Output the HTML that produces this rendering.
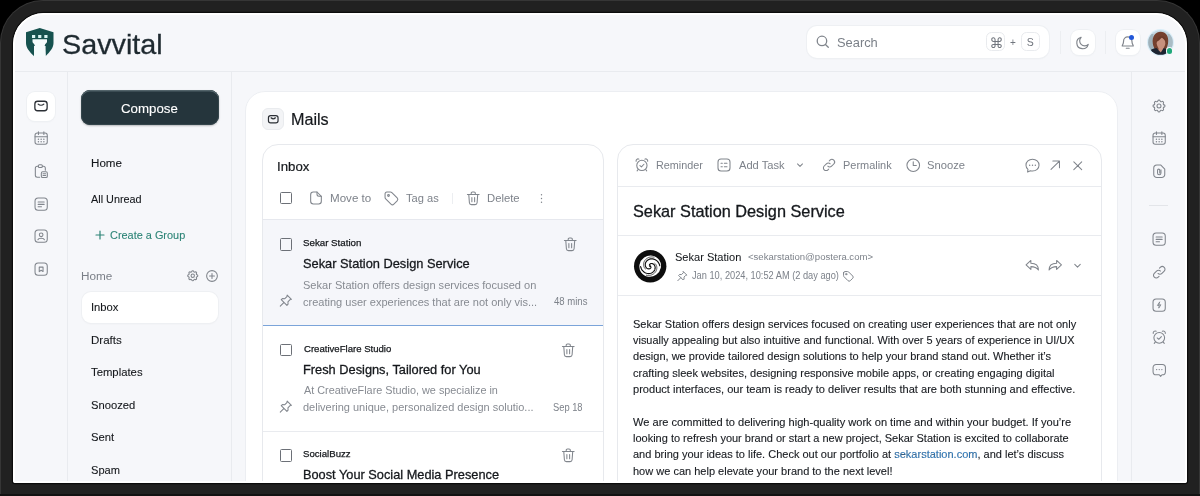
<!DOCTYPE html>
<html lang="en">
<head>
<meta charset="utf-8">
<title>Savvital Mails</title>
<style>
*{box-sizing:border-box;margin:0;padding:0}
html,body{width:1200px;height:496px;overflow:hidden;background:#000;font-family:"Liberation Sans",sans-serif;color:#1c2025}
#frame{position:absolute;left:0;top:0;width:1200px;height:494px;background:#212121;border:1px solid #363636;border-bottom:none;border-radius:43px 43px 0 0}
#frame2{position:absolute;left:0;top:494px;width:1200px;height:2px;background:#121212}
#screen{position:absolute;left:13px;top:13px;width:1174px;height:470px;background:#f6f7fa;border-radius:31px 31px 2px 2px;overflow:hidden;box-shadow:0 0 0 1.200px #0c0c0c}
#rim{position:absolute;left:0;top:0;width:1174px;height:470px;border:2px solid #fff;border-bottom-width:2.600px;border-radius:31px 31px 2px 2px;pointer-events:none}
#pg{position:absolute;left:-13px;top:-13px;width:1200px;height:496px;will-change:transform}
.b{position:absolute}
.t{position:absolute;white-space:nowrap;line-height:1;transform-origin:0 0}
.ln{position:absolute;background:#e9ebef}
svg{position:absolute;overflow:visible}
.ic{stroke:#6e737b;fill:none;stroke-width:1.15;stroke-linecap:round;stroke-linejoin:round}
.cb{position:absolute;width:12.5px;height:12.5px;border:1px solid #6c7077;border-radius:1.500px;background:transparent}
.panel{position:absolute;border:1px solid #e7e9ed;border-radius:16px;background:#fff;overflow:hidden}
.wbtn{position:absolute;background:#fff;border-radius:8px;box-shadow:0 0 0 1px #eef0f3,0 1px 2px rgba(20,30,50,.05)}
</style>
</head>
<body>
<div id="frame"></div><div id="frame2"></div>
<div id="screen"><div id="pg">

<!-- header -->
<div class="ln" style="left:13px;top:71px;width:1174px;height:1px"></div>
<div class="wbtn" style="left:806.500px;top:25.500px;width:242.300px;height:32.500px;border-radius:10px"></div>
<div class="b" style="left:986.300px;top:32.200px;width:19px;height:18.800px;border:1px solid #e9ebee;border-radius:5.500px;background:#fff"></div>
<div class="b" style="left:1020.800px;top:32.200px;width:18.800px;height:18.800px;border:1px solid #e9ebee;border-radius:5.500px;background:#fff"></div>
<div class="ln" style="left:1059.5px;top:31px;width:1px;height:23px;background:#eceef1"></div>
<div class="ln" style="left:1105px;top:31px;width:1px;height:23px;background:#eceef1"></div>
<div class="wbtn" style="left:1070.5px;top:30px;width:24.5px;height:24.5px"></div>
<div class="wbtn" style="left:1115.5px;top:30px;width:24.5px;height:24.5px"></div>

<!-- sidebars borders -->
<div class="ln" style="left:67px;top:72px;width:1px;height:420px"></div>
<div class="ln" style="left:231px;top:72px;width:1px;height:420px"></div>
<div class="ln" style="left:1131px;top:72px;width:1px;height:420px"></div>
<div class="ln" style="left:1149px;top:205px;width:19px;height:1px;background:#e3e5e9"></div>

<!-- left rail active -->
<div class="wbtn" style="left:27px;top:92px;width:28px;height:28.5px;border-radius:8px"></div>

<!-- compose -->
<div class="b" style="left:80.500px;top:90px;width:138.500px;height:34.800px;border-radius:9px;background:#25353c;box-shadow:inset 0 1.500px 0 #53646a,inset 0 0 0 1px #34454b,0 1px 2px rgba(0,0,0,.25)"></div>
<!-- inbox active -->
<div class="wbtn" style="left:82px;top:292px;width:135.500px;height:30.800px;border-radius:9px"></div>

<!-- main card -->
<div class="b" style="left:245px;top:90.800px;width:873px;height:420px;background:#fff;border-radius:20px;border:1px solid #eceef2"></div>
<div class="b" style="left:261.500px;top:108px;width:22.5px;height:21.5px;background:#f3f4f6;border:1px solid #e9ebee;border-radius:6px"></div>

<!-- inbox panel -->
<div class="panel" style="left:262px;top:143.500px;width:342px;height:380px">
  <div class="b" style="left:0;top:75px;width:342px;height:106px;background:#f5f6fa"></div>
  <div class="ln" style="left:0;top:74.500px;width:342px;height:1px;background:#e6e8ee"></div>
  <div class="ln" style="left:0;top:180.200px;width:342px;height:1.700px;background:#7ba4d9"></div>
  <div class="ln" style="left:0;top:286px;width:342px;height:1px"></div>
</div>
<div class="ln" style="left:452px;top:193px;width:1px;height:11px;background:#eceef1"></div>
<div class="cb" style="left:279.700px;top:191.800px"></div>
<div class="cb" style="left:279.700px;top:238.200px"></div>
<div class="cb" style="left:279.700px;top:343.500px"></div>
<div class="cb" style="left:279.700px;top:449.300px"></div>

<!-- detail panel -->
<div class="panel" style="left:617px;top:143.500px;width:484.500px;height:380px">
  <div class="ln" style="left:0;top:41.500px;width:484px;height:1px"></div>
  <div class="ln" style="left:0;top:90.500px;width:484px;height:1px"></div>
  <div class="ln" style="left:0;top:150.800px;width:484px;height:1px"></div>
</div>


<header class="app-header">
<svg style="left:815.00px;top:34.20px" width="15.2" height="15.2" viewBox="0 0 24 24"><g class="ic" style="stroke:#80858c;stroke-width:2.05"><circle cx="11" cy="11" r="7.500"/><path d="M16.500 16.500L21 21"/></g></svg>
<svg style="left:1075.05px;top:34.55px" width="15.5" height="15.5" viewBox="0 0 24 24"><g class="ic" style="stroke:#80858c;stroke-width:1.78"><path d="M20.500 14.500A9 9 0 1 1 9.500 3.500a7 7 0 0 0 11 11z"/></g></svg>
<svg style="left:1119.75px;top:35.25px" width="15.5" height="15.5" viewBox="0 0 24 24"><g class="ic" style="stroke:#80858c;stroke-width:1.86"><path d="M12 3a6.500 6.500 0 0 0-6.500 6.500c0 4.500-2 6-2 7.500h17c0-1.500-2-3-2-7.500A6.500 6.500 0 0 0 12 3zM9.800 20.500h4.400"/></g></svg>
<svg style="left:26px;top:28px" width="27.5" height="28.500" viewBox="0 0 27.5 28.5"><path d="M13.750 0 L27.500 4.300 V15 C27.500 20 24 23.500 19.600 28.300 V18 H8 V28.300 C3.500 23.500 0 20 0 15 V4.300 Z" fill="#16524f"/><path d="M6 7h3.200v2.900H6zM12.150 7h3.200v2.900h-3.200zM18.300 7h3.200v2.900h-3.200z" fill="#d9f5f4"/><path d="M6.500 11.300h14.500v2.500c0 1.500-2.200 2-2.300 4l1 10.700H7.800l1-10.700c-.1-2-2.300-2.500-2.300-4z" fill="#f4fbfb"/></svg>
<div class="b" style="left:1128.600px;top:34.600px;width:5.400px;height:5.400px;border-radius:50%;background:#2257d8"></div>
<svg style="left:1147.300px;top:28.900px" width="27" height="27" viewBox="0 0 27 27"><defs><clipPath id="av"><circle cx="13.500" cy="13.500" r="12.300"/></clipPath></defs><circle cx="13.500" cy="13.500" r="13.500" fill="#d9edf8"/><g clip-path="url(#av)"><rect width="27" height="27" fill="#c3d6e0"/><rect x="0" y="5" width="6.500" height="17" fill="#9fb2bb"/><rect x="20.500" y="5" width="6.500" height="15" fill="#a9bcc5"/><path d="M5.800 14.500c-1-7.500 3-11.800 7.900-11.800s8.600 4.300 7.300 11.800c-.5 3-1.300 5-2.300 6.500H8.300c-1.200-1.500-2.100-3.700-2.500-6.500z" fill="#75402e"/><ellipse cx="14" cy="14.200" rx="4.300" ry="5.700" fill="#c7917e"/><path d="M9.200 13c.8-4 3-5.800 5.800-5.800 2.500 0 4 2 4.200 5-1.800-1.200-3.300-2.800-4.300-3.800-1.600 1.800-3.700 3.700-5.700 4.600z" fill="#6c3a29"/><path d="M11.500 19h5v3.500l-2.500 2-2.500-2z" fill="#c98f7c"/><path d="M0 27c.5-5 4.500-7.300 9.500-8l4.300 4.500 2.700-4.300c4.500.8 8 3 9 7.800z" fill="#1c2330"/></g></svg>
<div class="b" style="left:1167.200px;top:48.400px;width:5.200px;height:5.200px;border-radius:50%;background:#1fa87a;box-shadow:0 0 0 1px #f6f7fa"></div>
<div class="t" style="left:62.03px;top:31.00px;font-size:28px;color:#1f2a30;-webkit-text-stroke:0.3px #1f2a30;transform:scaleX(1.0270);">Savvital</div>
<div class="t" style="left:836.95px;top:36.00px;font-size:13px;color:#7b8088;transform:scaleX(0.9898);">Search</div>
<div class="t" style="left:989.60px;top:36.00px;font-size:14px;color:#70757d;font-family:'DejaVu Sans',sans-serif;">⌘</div>
<div class="t" style="left:1010.00px;top:38.00px;font-size:10px;color:#70757d;">+</div>
<div class="t" style="left:1026.80px;top:37.00px;font-size:10.5px;color:#70757d;">S</div>
</header>
<nav class="rail">
<svg style="left:32.90px;top:97.90px" width="16" height="16" viewBox="0 0 24 24"><g class="ic" style="stroke:#2b2f35;stroke-width:1.95"><rect x="2.800" y="4.900" width="18.400" height="14.200" rx="4.200"/><path d="M7.800 9.200c2.200 2 6.200 2 8.400 0"/></g></svg>
<svg style="left:32.65px;top:130.35px" width="16.3" height="16.3" viewBox="0 0 24 24"><g class="ic" style="stroke:#80858c;stroke-width:1.55"><rect x="3" y="4.500" width="18" height="16.500" rx="3.200"/><path d="M3 9.800h18M8 2.500v4M16 2.500v4"/><path d="M8 13.600h.01M12 13.600h.01M16 13.600h.01M8 17.200h.01M12 17.200h.01M16 17.200h.01" stroke-width="2.200"/></g></svg>
<svg style="left:32.80px;top:163.30px" width="16" height="16" viewBox="0 0 24 24"><g class="ic" style="stroke:#80858c;stroke-width:1.58"><path d="M8 4.800H6.500a3 3 0 0 0-3 3V18.500a3 3 0 0 0 3 3H10M14 4.800h1.500a3 3 0 0 1 3 3V11"/><rect x="8" y="2.500" width="6" height="4.200" rx="1.600"/><rect x="12.500" y="13.200" width="9" height="8.600" rx="2"/><path d="M15 16.200h4M15 18.800h4"/></g></svg>
<svg style="left:32.55px;top:195.55px" width="16.3" height="16.3" viewBox="0 0 24 24"><g class="ic" style="stroke:#80858c;stroke-width:1.55"><rect x="3" y="3" width="18" height="18" rx="4.500"/><path d="M7.500 8.800h9M7.500 12.300h9M7.500 15.800h5"/></g></svg>
<svg style="left:32.55px;top:228.35px" width="16.3" height="16.3" viewBox="0 0 24 24"><g class="ic" style="stroke:#80858c;stroke-width:1.55"><rect x="3" y="3" width="18" height="18" rx="4.500"/><circle cx="12" cy="10" r="2.700"/><path d="M7.200 17.300c.8-3 8.800-3 9.600 0"/></g></svg>
<svg style="left:32.55px;top:260.65px" width="16.3" height="16.3" viewBox="0 0 24 24"><g class="ic" style="stroke:#80858c;stroke-width:1.55"><rect x="3" y="3" width="18" height="18" rx="4.500"/><path d="M9.200 9h5.600v6.600l-2.800-1.900-2.800 1.900z"/></g></svg>
</nav>
<nav class="sidebar">
<svg style="left:93.50px;top:228.80px" width="12" height="12" viewBox="0 0 24 24"><g class="ic" style="stroke:#2c8476;stroke-width:2.40"><path d="M12 4v16M4 12h16"/></g></svg>
<svg style="left:185.55px;top:269.25px" width="13.5" height="13.5" viewBox="0 0 24 24"><g class="ic" style="stroke:#80858c;stroke-width:1.87"><path d="M10.325 4.317c.426-1.756 2.924-1.756 3.350 0a1.724 1.724 0 0 0 2.573 1.066c1.543-.940 3.310.826 2.370 2.370a1.724 1.724 0 0 0 1.065 2.572c1.756.426 1.756 2.924 0 3.350a1.724 1.724 0 0 0-1.066 2.573c.940 1.543-.826 3.310-2.370 2.370a1.724 1.724 0 0 0-2.572 1.065c-.426 1.756-2.924 1.756-3.350 0a1.724 1.724 0 0 0-2.573-1.066c-1.543.940-3.310-.826-2.370-2.370a1.724 1.724 0 0 0-1.065-2.572c-1.756-.426-1.756-2.924 0-3.350a1.724 1.724 0 0 0 1.066-2.573c-.940-1.543.826-3.310 2.370-2.370 1 .608 2.296.070 2.572-1.065z"/><circle cx="12" cy="12" r="3"/></g></svg>
<svg style="left:205.00px;top:269.00px" width="14" height="14" viewBox="0 0 24 24"><g class="ic" style="stroke:#80858c;stroke-width:1.80"><circle cx="12" cy="12" r="9.200"/><path d="M12 7.800v8.400M7.800 12h8.400"/></g></svg>
<div class="t" style="left:121.36px;top:102.00px;font-size:13.5px;color:#ffffff;-webkit-text-stroke:0.12px #ffffff;transform:scaleX(0.9833);">Compose</div>
<div class="t" style="left:90.77px;top:157.00px;font-size:11.7px;color:#15181c;-webkit-text-stroke:0.1px #15181c;transform:scaleX(0.9938);">Home</div>
<div class="t" style="left:90.80px;top:193.00px;font-size:11.7px;color:#15181c;-webkit-text-stroke:0.1px #15181c;transform:scaleX(0.9282);">All Unread</div>
<div class="t" style="left:110.04px;top:229.00px;font-size:11.7px;color:#2c8476;-webkit-text-stroke:0.1px #2c8476;transform:scaleX(0.9337);">Create a Group</div>
<div class="t" style="left:80.53px;top:270.00px;font-size:11.7px;color:#7a7f87;transform:scaleX(1.0049);">Home</div>
<div class="t" style="left:90.59px;top:301.00px;font-size:11.7px;color:#15181c;-webkit-text-stroke:0.1px #15181c;transform:scaleX(0.9609);">Inbox</div>
<div class="t" style="left:90.78px;top:334.00px;font-size:11.7px;color:#15181c;-webkit-text-stroke:0.1px #15181c;transform:scaleX(0.9863);">Drafts</div>
<div class="t" style="left:90.66px;top:366.00px;font-size:11.7px;color:#15181c;-webkit-text-stroke:0.1px #15181c;transform:scaleX(0.9674);">Templates</div>
<div class="t" style="left:90.92px;top:399.00px;font-size:11.7px;color:#15181c;-webkit-text-stroke:0.1px #15181c;transform:scaleX(0.9594);">Snoozed</div>
<div class="t" style="left:90.91px;top:431.00px;font-size:11.7px;color:#15181c;-webkit-text-stroke:0.1px #15181c;transform:scaleX(0.9630);">Sent</div>
<div class="t" style="left:90.91px;top:464.00px;font-size:11.7px;color:#15181c;-webkit-text-stroke:0.1px #15181c;transform:scaleX(0.9496);">Spam</div>
</nav>
<section class="inbox">
<svg style="left:266.95px;top:112.55px" width="12.5" height="12.5" viewBox="0 0 24 24"><g class="ic" style="stroke:#2b2f35;stroke-width:2.30"><rect x="2.800" y="4.900" width="18.400" height="14.200" rx="4.200"/><path d="M7.800 9.200c2.200 2 6.200 2 8.400 0"/></g></svg>
<svg style="left:307.50px;top:190.10px" width="16" height="16" viewBox="0 0 24 24"><g class="ic" style="stroke:#80858c;stroke-width:1.58"><path d="M13.500 3H8a4 4 0 0 0-4 4v10a4 4 0 0 0 4 4h8a4 4 0 0 0 4-4V9.500z"/><path d="M13.500 3v3.500a3 3 0 0 0 3 3H20"/></g></svg>
<svg style="left:383.05px;top:190.25px" width="16.5" height="16.5" viewBox="0 0 24 24"><g class="ic" style="stroke:#80858c;stroke-width:1.53"><path d="M3 5.500v5.300a3 3 0 0 0 .9 2.100l7.700 7.700a3 3 0 0 0 4.200 0l4.800-4.800a3 3 0 0 0 0-4.200L12.900 3.900A3 3 0 0 0 10.800 3H5.500A2.500 2.500 0 0 0 3 5.500z"/><circle cx="8" cy="8" r="1.300"/></g></svg>
<svg style="left:464.75px;top:189.75px" width="16.5" height="16.5" viewBox="0 0 24 24"><g class="ic" style="stroke:#80858c;stroke-width:1.53"><path d="M3.500 6.500h17M9 6.500V4.800A1.800 1.800 0 0 1 10.800 3h2.400A1.800 1.800 0 0 1 15 4.800v1.700M5.500 6.500l.9 12a3 3 0 0 0 3 2.800h5.200a3 3 0 0 0 3-2.800l.9-12M10 11v6M14 11v6"/></g></svg>
<svg style="left:534.80px;top:191.70px" width="13" height="13" viewBox="0 0 24 24"><g class="ic" style="stroke:#80858c;stroke-width:1.94"><path d="M12 5h.01M12 12h.01M12 19h.01" stroke-width="2.600"/></g></svg>
<svg style="left:562.45px;top:235.75px" width="16.5" height="16.5" viewBox="0 0 24 24"><g class="ic" style="stroke:#80858c;stroke-width:1.53"><path d="M3.500 6.500h17M9 6.500V4.800A1.800 1.800 0 0 1 10.800 3h2.400A1.800 1.800 0 0 1 15 4.800v1.700M5.500 6.500l.9 12a3 3 0 0 0 3 2.800h5.200a3 3 0 0 0 3-2.800l.9-12M10 11v6M14 11v6"/></g></svg>
<svg style="left:559.95px;top:341.55px" width="16.5" height="16.5" viewBox="0 0 24 24"><g class="ic" style="stroke:#80858c;stroke-width:1.53"><path d="M3.500 6.500h17M9 6.500V4.800A1.800 1.800 0 0 1 10.800 3h2.400A1.800 1.800 0 0 1 15 4.800v1.700M5.500 6.500l.9 12a3 3 0 0 0 3 2.800h5.200a3 3 0 0 0 3-2.800l.9-12M10 11v6M14 11v6"/></g></svg>
<svg style="left:559.95px;top:447.15px" width="16.5" height="16.5" viewBox="0 0 24 24"><g class="ic" style="stroke:#80858c;stroke-width:1.53"><path d="M3.500 6.500h17M9 6.500V4.800A1.800 1.800 0 0 1 10.800 3h2.400A1.800 1.800 0 0 1 15 4.800v1.700M5.500 6.500l.9 12a3 3 0 0 0 3 2.800h5.200a3 3 0 0 0 3-2.800l.9-12M10 11v6M14 11v6"/></g></svg>
<svg style="left:278.25px;top:293.45px" width="15.5" height="15.5" viewBox="0 0 24 24"><g class="ic" style="stroke:#80858c;stroke-width:1.63"><path d="M14.200 3.200l6.600 6.600-2.200.6-3.200 3.200.2 3.800-1.800 1.800L5 10.400l1.800-1.800 3.800.2 3.200-3.200zM9 15l-5.500 5.500"/></g></svg>
<svg style="left:278.25px;top:399.25px" width="15.5" height="15.5" viewBox="0 0 24 24"><g class="ic" style="stroke:#80858c;stroke-width:1.63"><path d="M14.200 3.200l6.600 6.600-2.200.6-3.200 3.200.2 3.800-1.800 1.800L5 10.400l1.800-1.800 3.800.2 3.200-3.200zM9 15l-5.500 5.500"/></g></svg>
<div class="t" style="left:291.13px;top:111.00px;font-size:16.3px;color:#15181c;-webkit-text-stroke:0.2px #15181c;transform:scaleX(0.9920);">Mails</div>
<div class="t" style="left:276.79px;top:160.00px;font-size:13px;color:#15181c;-webkit-text-stroke:0.2px #15181c;transform:scaleX(1.0171);">Inbox</div>
<div class="t" style="left:329.93px;top:193.00px;font-size:11.5px;color:#7d828a;transform:scaleX(1.0072);">Move to</div>
<div class="t" style="left:406.15px;top:193.00px;font-size:11.5px;color:#7d828a;transform:scaleX(0.9654);">Tag as</div>
<div class="t" style="left:487.08px;top:193.00px;font-size:11.5px;color:#7d828a;transform:scaleX(0.9813);">Delete</div>
<div class="t" style="left:303.23px;top:238.00px;font-size:9.6px;color:#15181c;-webkit-text-stroke:0.25px #15181c;transform:scaleX(1.0139);">Sekar Station</div>
<div class="t" style="left:303.30px;top:257.00px;font-size:13.1px;color:#15181c;-webkit-text-stroke:0.3px #15181c;transform:scaleX(0.9787);">Sekar Station Design Service</div>
<div class="t" style="left:303.18px;top:280.00px;font-size:11.5px;color:#878b92;transform:scaleX(0.9614);">Sekar Station offers design services focused on</div>
<div class="t" style="left:303.31px;top:297.00px;font-size:11.5px;color:#878b92;transform:scaleX(0.9590);">creating user experiences that are not only vis...</div>
<div class="t" style="left:554.35px;top:297.00px;font-size:10px;color:#7d828a;transform:scaleX(0.9541);">48 mins</div>
<div class="t" style="left:303.60px;top:344.00px;font-size:9.6px;color:#15181c;-webkit-text-stroke:0.25px #15181c;transform:scaleX(0.9981);">CreativeFlare Studio</div>
<div class="t" style="left:302.96px;top:363.00px;font-size:13.1px;color:#15181c;-webkit-text-stroke:0.3px #15181c;transform:scaleX(0.9775);">Fresh Designs, Tailored for You</div>
<div class="t" style="left:303.79px;top:385.00px;font-size:11.5px;color:#878b92;transform:scaleX(0.9421);">At CreativeFlare Studio, we specialize in</div>
<div class="t" style="left:303.36px;top:402.00px;font-size:11.5px;color:#878b92;transform:scaleX(0.9539);">delivering unique, personalized design solutio...</div>
<div class="t" style="left:553.49px;top:403.00px;font-size:10px;color:#7d828a;transform:scaleX(0.9327);">Sep 18</div>
<div class="t" style="left:303.26px;top:449.00px;font-size:9.6px;color:#15181c;-webkit-text-stroke:0.25px #15181c;transform:scaleX(1.0034);">SocialBuzz</div>
<div class="t" style="left:302.96px;top:468.00px;font-size:13.1px;color:#15181c;-webkit-text-stroke:0.3px #15181c;transform:scaleX(0.9756);">Boost Your Social Media Presence</div>
</section>
<article class="mail-detail">
<svg style="left:633.60px;top:157.10px" width="15.8" height="15.8" viewBox="0 0 24 24"><g class="ic" style="stroke:#80858c;stroke-width:1.59"><circle cx="12" cy="12.800" r="7.800"/><path d="M3.200 6.500a3 3 0 0 1 4.300-3.300M20.800 6.500a3 3 0 0 0-4.300-3.300M9 13l2.300 2 3.800-4M6.200 19l-1.500 2M17.800 19l1.500 2"/></g></svg>
<svg style="left:716.30px;top:157.00px" width="16" height="16" viewBox="0 0 24 24"><g class="ic" style="stroke:#80858c;stroke-width:1.58"><rect x="3" y="3" width="18" height="18" rx="4.500"/><path d="M7.500 9.500h2M12.500 9.500h4M7.500 14.500h2M12.500 14.500h4"/></g></svg>
<svg style="left:795.00px;top:159.80px" width="10" height="10" viewBox="0 0 24 24"><g class="ic" style="stroke:#80858c;stroke-width:2.52"><path d="M6 9.500l6 6 6-6"/></g></svg>
<svg style="left:821.00px;top:157.30px" width="16" height="16" viewBox="0 0 24 24"><g class="ic" style="stroke:#80858c;stroke-width:1.58"><path d="M10.200 13.800a4 4 0 0 0 5.700 0l3.300-3.300a4 4 0 0 0-5.700-5.700l-1.200 1.200"/><path d="M13.800 10.200a4 4 0 0 0-5.700 0l-3.300 3.300a4 4 0 0 0 5.700 5.700l1.200-1.200"/></g></svg>
<svg style="left:904.75px;top:156.75px" width="16.5" height="16.5" viewBox="0 0 24 24"><g class="ic" style="stroke:#80858c;stroke-width:1.53"><circle cx="12" cy="12" r="9.200"/><path d="M12 7v5.500h4.500"/></g></svg>
<svg style="left:1023.50px;top:156.70px" width="17" height="17" viewBox="0 0 24 24"><g class="ic" style="stroke:#80858c;stroke-width:1.48"><path d="M12 3.200c5.200 0 9.200 3.600 9.200 8.300s-4 8.300-9.200 8.300c-1 0-2-.1-2.900-.4L5 21.200l.6-3.800c-1.800-1.500-2.800-3.600-2.800-5.900 0-4.700 4-8.300 9.200-8.300z"/><path d="M8 11.600h.01M12 11.600h.01M16 11.600h.01" stroke-width="2"/></g></svg>
<svg style="left:1047.75px;top:158.05px" width="14.5" height="14.5" viewBox="0 0 24 24"><g class="ic" style="stroke:#80858c;stroke-width:1.74"><path d="M5 19L19 5M8 5h11v11"/></g></svg>
<svg style="left:1071.05px;top:158.55px" width="13.5" height="13.5" viewBox="0 0 24 24"><g class="ic" style="stroke:#80858c;stroke-width:1.87"><path d="M5 5l14 14M19 5L5 19"/></g></svg>
<svg style="left:675.75px;top:270.05px" width="12.5" height="12.5" viewBox="0 0 24 24"><g class="ic" style="stroke:#80858c;stroke-width:1.92"><path d="M14.200 3.200l6.600 6.600-2.200.6-3.200 3.200.2 3.800-1.800 1.800L5 10.400l1.800-1.800 3.800.2 3.200-3.200zM9 15l-5.500 5.500"/></g></svg>
<svg style="left:842.25px;top:269.75px" width="12.5" height="12.5" viewBox="0 0 24 24"><g class="ic" style="stroke:#80858c;stroke-width:1.92"><path d="M3 5.500v5.300a3 3 0 0 0 .9 2.100l7.700 7.700a3 3 0 0 0 4.200 0l4.800-4.800a3 3 0 0 0 0-4.200L12.900 3.900A3 3 0 0 0 10.800 3H5.500A2.500 2.500 0 0 0 3 5.500z"/><circle cx="8" cy="8" r="1.300"/></g></svg>
<svg style="left:1023.75px;top:257.25px" width="16.5" height="16.5" viewBox="0 0 24 24"><g class="ic" style="stroke:#80858c;stroke-width:1.53"><path d="M10 5L3 11.500l7 6.500v-4c5 0 8.500 1.500 11 5 0-6-4-10-11-10z"/></g></svg>
<svg style="left:1046.75px;top:257.25px" width="16.5" height="16.5" viewBox="0 0 24 24"><g class="ic" style="stroke:#80858c;stroke-width:1.53"><path d="M14 5l7 6.500-7 6.500v-4c-5 0-8.500 1.500-11 5 0-6 4-10 11-10z"/></g></svg>
<svg style="left:1072.00px;top:260.20px" width="11" height="11" viewBox="0 0 24 24"><g class="ic" style="stroke:#80858c;stroke-width:2.29"><path d="M6 9.500l6 6 6-6"/></g></svg>
<svg style="left:633.800px;top:249.800px" width="32.4" height="32.4" viewBox="0 0 32.4 32.4"><circle cx="16.200" cy="16.200" r="16.200" fill="#0d0d0d"/><ellipse cx="16.200" cy="16.200" rx="11" ry="10.5" fill="#fff" transform="rotate(-35 16.200 16.200)"/><g fill="none" stroke="#0d0d0d" stroke-width="1.150" stroke-linecap="round"><path d="M16.95 17.14 L16.92 17.41 L16.84 17.69 L16.69 17.96 L16.48 18.22 L16.21 18.45 L15.88 18.64 L15.50 18.78 L15.09 18.86 L14.64 18.86 L14.17 18.80 L13.69 18.65 L13.21 18.42 L12.76 18.10 L12.34 17.71 L11.97 17.23 L11.67 16.68 L11.43 16.07 L11.28 15.40 L11.23 14.69 L11.29 13.95 L11.45 13.21 L11.73 12.47 L12.13 11.75 L12.64 11.08 L13.25 10.46 L13.97 9.92 L14.79 9.48 L15.68 9.14 L16.63 8.92 L17.64 8.84 L18.67 8.90 L19.72 9.10 L20.75 9.46 L21.74 9.97 L22.68 10.63 L23.54 11.42 L24.30 12.35 L24.94 13.40 L25.44 14.56 L25.79 15.79"/><path d="M15.45 15.26 L15.48 14.99 L15.56 14.71 L15.71 14.44 L15.92 14.18 L16.19 13.95 L16.52 13.76 L16.90 13.62 L17.31 13.54 L17.76 13.54 L18.23 13.60 L18.71 13.75 L19.19 13.98 L19.64 14.30 L20.06 14.69 L20.43 15.17 L20.73 15.72 L20.97 16.33 L21.12 17.00 L21.17 17.71 L21.11 18.45 L20.95 19.19 L20.67 19.93 L20.27 20.65 L19.76 21.32 L19.15 21.94 L18.43 22.48 L17.61 22.92 L16.72 23.26 L15.77 23.48 L14.76 23.56 L13.73 23.50 L12.68 23.30 L11.65 22.94 L10.66 22.43 L9.72 21.77 L8.86 20.98 L8.10 20.05 L7.46 19.00 L6.96 17.84 L6.61 16.61"/><path d="M11.49 19.04 L11.22 18.78 L10.97 18.51 L10.74 18.21 L10.52 17.90 L10.32 17.56 L10.14 17.21 L9.98 16.84 L9.84 16.45 L9.73 16.05 L9.65 15.63 L9.59 15.20 L9.56 14.77 L9.56 14.33 L9.59 13.88 L9.65 13.42 L9.74 12.97 L9.87 12.52 L10.02 12.07 L10.21 11.62 L10.42 11.18 L10.67 10.76 L10.95 10.34 L11.27 9.94 L11.61 9.55 L11.98 9.18 L12.38 8.84 L12.81 8.51 L13.26 8.22 L13.73 7.94 L14.23 7.70 L14.75 7.49 L15.29 7.31 L15.85 7.16 L16.42 7.05 L17.00 6.97 L17.60 6.93 L18.20 6.94 L18.80 6.98 L19.41 7.06 L20.02 7.18" stroke-width="0.7"/><path d="M20.91 13.36 L21.18 13.62 L21.43 13.89 L21.66 14.19 L21.88 14.50 L22.08 14.84 L22.26 15.19 L22.42 15.56 L22.56 15.95 L22.67 16.35 L22.75 16.77 L22.81 17.20 L22.84 17.63 L22.84 18.07 L22.81 18.52 L22.75 18.98 L22.66 19.43 L22.53 19.88 L22.38 20.33 L22.19 20.78 L21.98 21.22 L21.73 21.64 L21.45 22.06 L21.13 22.46 L20.79 22.85 L20.42 23.22 L20.02 23.56 L19.59 23.89 L19.14 24.18 L18.67 24.46 L18.17 24.70 L17.65 24.91 L17.11 25.09 L16.55 25.24 L15.98 25.35 L15.40 25.43 L14.80 25.47 L14.20 25.46 L13.60 25.42 L12.99 25.34 L12.38 25.22" stroke-width="0.7"/><circle cx="16.200" cy="16.200" r="1" fill="#0d0d0d" stroke="none"/></g></svg>
<div class="t" style="left:655.71px;top:160.00px;font-size:11.5px;color:#7d828a;transform:scaleX(0.9398);">Reminder</div>
<div class="t" style="left:739.38px;top:160.00px;font-size:11.5px;color:#7d828a;transform:scaleX(0.9680);">Add Task</div>
<div class="t" style="left:842.71px;top:160.00px;font-size:11.5px;color:#7d828a;transform:scaleX(0.9512);">Permalink</div>
<div class="t" style="left:926.82px;top:160.00px;font-size:11.5px;color:#7d828a;transform:scaleX(0.9742);">Snooze</div>
<div class="t" style="left:633.29px;top:203.00px;font-size:16.2px;color:#15181c;-webkit-text-stroke:0.3px #15181c;transform:scaleX(1.0058);">Sekar Station Design Service</div>
<div class="t" style="left:674.80px;top:251.00px;font-size:11.7px;color:#15181c;-webkit-text-stroke:0.05px #15181c;transform:scaleX(0.9449);">Sekar Station</div>
<div class="t" style="left:747.91px;top:252.00px;font-size:9.7px;color:#7d828a;transform:scaleX(0.9867);">&lt;sekarstation@postera.com&gt;</div>
<div class="t" style="left:691.63px;top:271.00px;font-size:10px;color:#7d828a;transform:scaleX(0.9241);">Jan 10, 2024, 10:52 AM (2 day ago)</div>
<div class="t" style="left:632.65px;top:319.00px;font-size:11.5px;color:#181b20;-webkit-text-stroke:0.12px #181b20;transform:scaleX(0.9566);">Sekar Station offers design services focused on creating user experiences that are not only</div>
<div class="t" style="left:633.14px;top:335.00px;font-size:11.5px;color:#181b20;-webkit-text-stroke:0.12px #181b20;transform:scaleX(0.9487);">visually appealing but also intuitive and functional. With over 5 years of experience in UI/UX</div>
<div class="t" style="left:632.93px;top:351.00px;font-size:11.5px;color:#181b20;-webkit-text-stroke:0.12px #181b20;transform:scaleX(0.9594);">design, we provide tailored design solutions to help your brand stand out. Whether it’s</div>
<div class="t" style="left:632.93px;top:368.00px;font-size:11.5px;color:#181b20;-webkit-text-stroke:0.12px #181b20;transform:scaleX(0.9585);">crafting sleek websites, designing responsive mobile apps, or creating engaging digital</div>
<div class="t" style="left:632.74px;top:384.00px;font-size:11.5px;color:#181b20;-webkit-text-stroke:0.12px #181b20;transform:scaleX(0.9627);">product interfaces, our team is ready to deliver results that are both stunning and effective.</div>
<div class="t" style="left:633.39px;top:417.00px;font-size:11.5px;color:#181b20;-webkit-text-stroke:0.12px #181b20;transform:scaleX(0.9631);">We are committed to delivering high-quality work on time and within your budget. If you’re</div>
<div class="t" style="left:632.74px;top:433.00px;font-size:11.5px;color:#181b20;-webkit-text-stroke:0.12px #181b20;transform:scaleX(0.9559);">looking to refresh your brand or start a new project, Sekar Station is excited to collaborate</div>
<div class="t" style="left:632.93px;top:449.00px;font-size:11.5px;color:#181b20;-webkit-text-stroke:0.12px #181b20;transform:scaleX(0.9570);">and bring your ideas to life. Check out our portfolio at <span style="color:#2f7fc4">sekarstation.com</span>, and let’s discuss</div>
<div class="t" style="left:632.72px;top:466.00px;font-size:11.5px;color:#181b20;-webkit-text-stroke:0.12px #181b20;transform:scaleX(0.9573);">how we can help elevate your brand to the next level!</div>
</article>
<aside class="tools">
<svg style="left:1151.20px;top:97.50px" width="16" height="16" viewBox="0 0 24 24"><g class="ic" style="stroke:#80858c;stroke-width:1.58"><path d="M10.325 4.317c.426-1.756 2.924-1.756 3.350 0a1.724 1.724 0 0 0 2.573 1.066c1.543-.940 3.310.826 2.370 2.370a1.724 1.724 0 0 0 1.065 2.572c1.756.426 1.756 2.924 0 3.350a1.724 1.724 0 0 0-1.066 2.573c.940 1.543-.826 3.310-2.370 2.370a1.724 1.724 0 0 0-2.572 1.065c-.426 1.756-2.924 1.756-3.350 0a1.724 1.724 0 0 0-2.573-1.066c-1.543.940-3.310-.826-2.370-2.370a1.724 1.724 0 0 0-1.065-2.572c-1.756-.426-1.756-2.924 0-3.350a1.724 1.724 0 0 0 1.066-2.573c-.940-1.543.826-3.310 2.370-2.370 1 .608 2.296.070 2.572-1.065z"/><circle cx="12" cy="12" r="3"/></g></svg>
<svg style="left:1151.05px;top:130.05px" width="16.3" height="16.3" viewBox="0 0 24 24"><g class="ic" style="stroke:#80858c;stroke-width:1.55"><rect x="3" y="4.500" width="18" height="16.500" rx="3.200"/><path d="M3 9.800h18M8 2.500v4M16 2.500v4"/><path d="M8 13.600h.01M12 13.600h.01M16 13.600h.01M8 17.200h.01M12 17.200h.01M16 17.200h.01" stroke-width="2.200"/></g></svg>
<svg style="left:1150.95px;top:162.85px" width="16.5" height="16.5" viewBox="0 0 24 24"><g class="ic" style="stroke:#80858c;stroke-width:1.53"><path d="M14 2.800H8.500a4.500 4.500 0 0 0-4.500 4.500v9.400a4.500 4.500 0 0 0 4.500 4.500h7a4.500 4.500 0 0 0 4.500-4.500V8.800z"/><path d="M14.500 10v4.500a2.500 2.500 0 0 1-5 0V10.500a1.600 1.600 0 0 1 3.200 0v4"/></g></svg>
<svg style="left:1151.05px;top:231.35px" width="16.3" height="16.3" viewBox="0 0 24 24"><g class="ic" style="stroke:#80858c;stroke-width:1.55"><rect x="3" y="3" width="18" height="18" rx="4.500"/><path d="M7.500 8.800h9M7.500 12.300h9M7.500 15.800h5"/></g></svg>
<svg style="left:1150.95px;top:264.05px" width="16.5" height="16.5" viewBox="0 0 24 24"><g class="ic" style="stroke:#80858c;stroke-width:1.53"><path d="M10.200 13.800a4 4 0 0 0 5.700 0l3.300-3.300a4 4 0 0 0-5.700-5.700l-1.200 1.200"/><path d="M13.800 10.200a4 4 0 0 0-5.700 0l-3.300 3.300a4 4 0 0 0 5.700 5.700l1.200-1.200"/></g></svg>
<svg style="left:1151.05px;top:297.35px" width="16.3" height="16.3" viewBox="0 0 24 24"><g class="ic" style="stroke:#80858c;stroke-width:1.55"><rect x="3" y="3" width="18" height="18" rx="4.500"/><path d="M12.600 7.600l-3.200 4.900h2.800l-.8 3.900 3.200-4.900h-2.800z" stroke-width="1.300"/></g></svg>
<svg style="left:1150.95px;top:329.05px" width="16.5" height="16.5" viewBox="0 0 24 24"><g class="ic" style="stroke:#80858c;stroke-width:1.53"><circle cx="12" cy="12.800" r="7.800"/><path d="M3.200 6.500a3 3 0 0 1 4.300-3.300M20.800 6.500a3 3 0 0 0-4.300-3.300M9 13l2.300 2 3.800-4M6.200 19l-1.500 2M17.800 19l1.500 2"/></g></svg>
<svg style="left:1150.95px;top:362.25px" width="16.5" height="16.5" viewBox="0 0 24 24"><g class="ic" style="stroke:#80858c;stroke-width:1.53"><path d="M7.500 3.500h9a4.500 4.500 0 0 1 4.500 4.500v6a4.500 4.500 0 0 1-4.500 4.500H16l-2 2.500-2-2.500H7.500A4.500 4.500 0 0 1 3 14V8a4.500 4.500 0 0 1 4.500-4.500z"/><path d="M8.200 11h.01M12 11h.01M15.800 11h.01" stroke-width="2"/></g></svg>
</aside>

</div><div id="rim"></div></div>
</body>
</html>
